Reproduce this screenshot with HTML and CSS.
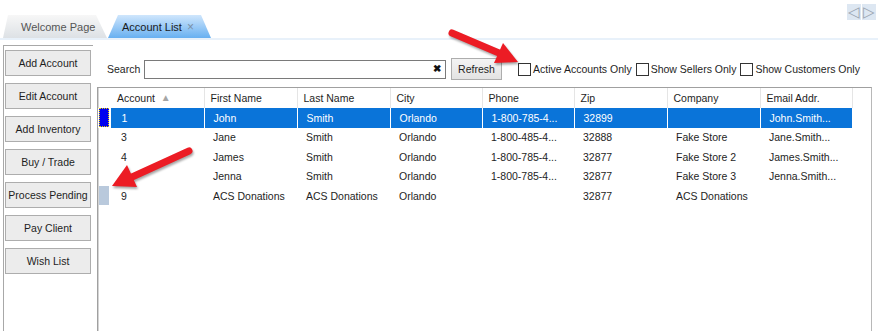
FILE: index.html
```html
<!DOCTYPE html>
<html lang="en">
  <head>
    <meta charset="utf-8">
    <title>Account List</title>
    <link rel="stylesheet" href="styles.css">
  </head>
  <body>
    <!-- Tab strip -->
    <div class="tabbar">
      <div class="tabs">
        <div class="tab">Welcome Page</div>
        <div class="tab tab-active">Account List <span class="tab-close">&times;</span></div>
      </div>
      <div class="tab-nav">
        <span class="nav-btn">&#9665;</span>
        <span class="nav-btn">&#9655;</span>
      </div>
    </div>

    <div class="main">
      <!-- Left button panel -->
      <div class="sidebar">
        <button type="button">Add Account</button>
        <button type="button">Edit Account</button>
        <button type="button">Add Inventory</button>
        <button type="button">Buy / Trade</button>
        <button type="button">Process Pending</button>
        <button type="button">Pay Client</button>
        <button type="button">Wish List</button>
      </div>

      <div class="content">
        <!-- Search / filter row -->
        <div class="toolbar">
          <label class="search-label" for="search">Search</label>
          <div class="search-box">
            <input id="search" type="text">
            <span class="clear">&#10006;</span>
          </div>
          <button type="button" class="refresh">Refresh</button>
          <label class="check"><input type="checkbox">Active Accounts Only</label>
          <label class="check"><input type="checkbox">Show Sellers Only</label>
          <label class="check"><input type="checkbox">Show Customers Only</label>
        </div>

        <!-- Accounts grid -->
        <div class="grid">
          <table>
            <colgroup>
              <col class="w-ind">
              <col class="w-94">
              <col class="w-93">
              <col class="w-93">
              <col class="w-92">
              <col class="w-92">
              <col class="w-93">
              <col class="w-93">
              <col class="w-92">
            </colgroup>
            <thead>
              <tr>
                <th class="ind"></th>
                <th class="c-acc">Account <span class="sort">&#9650;</span></th>
                <th>First Name</th>
                <th>Last Name</th>
                <th>City</th>
                <th>Phone</th>
                <th>Zip</th>
                <th>Company</th>
                <th>Email Addr.</th>
              </tr>
            </thead>
            <tbody>
              <tr class="selected">
                <td class="ind"><span class="mark-current"></span></td>
                <td class="c-acc">1</td>
                <td>John</td>
                <td>Smith</td>
                <td>Orlando</td>
                <td>1-800-785-4...</td>
                <td>32899</td>
                <td></td>
                <td>John.Smith...</td>
              </tr>
              <tr>
                <td class="ind"></td>
                <td class="c-acc">3</td>
                <td>Jane</td>
                <td>Smith</td>
                <td>Orlando</td>
                <td>1-800-485-4...</td>
                <td>32888</td>
                <td>Fake Store</td>
                <td>Jane.Smith...</td>
              </tr>
              <tr>
                <td class="ind"></td>
                <td class="c-acc">4</td>
                <td>James</td>
                <td>Smith</td>
                <td>Orlando</td>
                <td>1-800-785-4...</td>
                <td>32877</td>
                <td>Fake Store 2</td>
                <td>James.Smith...</td>
              </tr>
              <tr>
                <td class="ind"></td>
                <td class="c-acc"></td>
                <td>Jenna</td>
                <td>Smith</td>
                <td>Orlando</td>
                <td>1-800-785-4...</td>
                <td>32877</td>
                <td>Fake Store 3</td>
                <td>Jenna.Smith...</td>
              </tr>
              <tr>
                <td class="ind"><span class="mark-pending"></span></td>
                <td class="c-acc">9</td>
                <td>ACS Donations</td>
                <td>ACS Donations</td>
                <td>Orlando</td>
                <td></td>
                <td>32877</td>
                <td>ACS Donations</td>
                <td></td>
              </tr>
            </tbody>
          </table>
        </div>
      </div>
    </div>

    <!-- Annotation arrows -->
    <svg class="arrows" width="878" height="331" viewBox="0 0 878 331">
      <g class="arrow">
        <line x1="452" y1="33" x2="499" y2="53" />
        <polygon points="494,63 503,43 518,62" />
      </g>
      <g class="arrow">
        <line x1="189" y1="151" x2="132" y2="177" />
        <polygon points="127,165 137,187 112,186" />
      </g>
    </svg>
  </body>
</html>
```

FILE: styles.css
```css
/* Basis */
body {
  margin: 0;
  padding: 0;
  background: #ffffff;
  font-family: "Liberation Sans", Arial, sans-serif;
  font-size: 10.5px;
  color: #1e1e1e;
  width: 878px;
  height: 331px;
  overflow: hidden;
  position: relative;
}

/* Tabs */
.tabbar {
  height: 38px;
  border-bottom: 2px solid #e8f1fa;
  display: flex;
  justify-content: space-between;
  align-items: flex-start;
}

.tabs {
  display: flex;
  align-items: flex-end;
  height: 38px;
  padding-left: 3px;
}

.tab {
  box-sizing: border-box;
  width: 104px;
  height: 23px;
  line-height: 24px;
  padding-left: 18px;
  font-size: 11px;
  color: #555;
  white-space: nowrap;
  background: linear-gradient(#f7f7f7, #dde1e5);
  clip-path: polygon(5px 0, calc(100% - 11px) 0, 100% 100%, 0 100%);
}

.tab-active {
  margin-left: 1px;
  width: 103px;
  padding-left: 14px;
  color: #1a1a1a;
  background: linear-gradient(#cfe6fc, #68b0f1);
  clip-path: polygon(10px 0, calc(100% - 10px) 0, 100% 100%, 0 100%);
}

.tab-close {
  color: #7b8fa6;
  font-size: 12px;
  margin-left: 2px;
}

.tab-nav {
  display: flex;
  gap: 1px;
  margin: 4px 2px 0 0;
}

.nav-btn {
  width: 14px;
  height: 16px;
  line-height: 16px;
  text-align: center;
  font-size: 15px;
  color: #9aa4b0;
  background: #dde7f2;
  overflow: hidden;
}

/* Layout */
.main {
  display: flex;
  margin-top: 5px;
}

.sidebar {
  width: 88px;
  margin-left: 3px;
  height: 285px;
  border-left: 1px solid #a8a8a8;
  border-top: 1px solid #a8a8a8;
  padding: 4px 0 0 1px;
  display: flex;
  flex-direction: column;
  gap: 7px;
}

.sidebar button {
  width: 86px;
  height: 26px;
  padding: 0;
  font-family: inherit;
  font-size: 10.5px;
  color: #1e1e1e;
  background: #ececec;
  border: 1px solid #adadad;
  border-radius: 0;
}

.content {
  flex: 1;
  margin-left: 4px;
}

/* Toolbar */
.toolbar {
  display: flex;
  align-items: center;
  height: 22px;
  margin-top: 13px;
  padding-left: 10px;
}

.search-label {
  width: 37px;
}

.search-box {
  position: relative;
  width: 302px;
  height: 19px;
}

.search-box input {
  width: 100%;
  height: 19px;
  box-sizing: border-box;
  border: 1px solid #7a7a7a;
  margin: 0;
  padding: 0 20px 0 3px;
}

.clear {
  position: absolute;
  right: 5px;
  top: 3px;
  font-size: 10px;
  font-weight: bold;
  color: #111;
}

.refresh {
  margin-left: 5px;
  width: 51px;
  height: 22px;
  padding: 0;
  font-family: inherit;
  font-size: 10.5px;
  color: #1e1e1e;
  background: linear-gradient(#f3f3f3, #e3e3e3);
  border: 1px solid #adadad;
}

.check {
  display: flex;
  align-items: center;
  margin-left: 16px;
}

.check + .check {
  margin-left: 4px;
}

.check input {
  appearance: none;
  width: 13px;
  height: 13px;
  margin: 0 2px 0 0;
  border: 1px solid #333;
  background: #fff;
}

/* Grid */
.grid {
  margin-top: 7px;
  width: 773px;
  height: 244px;
  border: 1px solid #a0a0a0;
  border-bottom: none;
  border-right-color: #b8b8b8;
  box-shadow: inset 1px 0 0 #d4d4d4;
}

table {
  border-collapse: collapse;
  table-layout: fixed;
  width: 754px;
}

.w-ind { width: 12px; }
.w-94 { width: 94px; }
.w-93 { width: 93px; }
.w-92 { width: 92px; }

th, td {
  padding: 0 0 0 9px;
  text-align: left;
  white-space: nowrap;
  overflow: hidden;
  box-sizing: border-box;
}

th {
  height: 20px;
  font-weight: normal;
  padding-left: 6px;
  border-right: 1px solid #e5e5e5;
}

td {
  height: 19.5px;
}

th.ind, td.ind {
  padding: 0 0 0 1px;
  border-right: none;
}

th.c-acc {
  padding-left: 7px;
}

td.c-acc {
  padding-left: 11px;
}

.sort {
  font-size: 10px;
  color: #a5a5a5;
  margin-left: 3px;
  vertical-align: 1px;
}

.selected td {
  background: #0a74d9;
  color: #ffffff;
  border-right: 1px solid #ffffff;
}

.selected td.ind {
  background: #ffffff;
}

.mark-current,
.mark-pending {
  display: block;
  width: 10px;
  height: 19px;
  box-sizing: border-box;
}

.mark-current {
  background: #0000f0;
  border: 1px dotted #e8d000;
}

.mark-pending {
  background: #b9c9dc;
}

/* Annotation arrows */
.arrows {
  position: absolute;
  left: 0;
  top: 0;
  pointer-events: none;
}

.arrow {
  filter: drop-shadow(1px 2px 1px rgba(0, 0, 0, 0.35));
}

.arrow line {
  stroke: #ec1c24;
  stroke-width: 7;
  stroke-linecap: round;
}

.arrow polygon {
  fill: #ec1c24;
}
```
